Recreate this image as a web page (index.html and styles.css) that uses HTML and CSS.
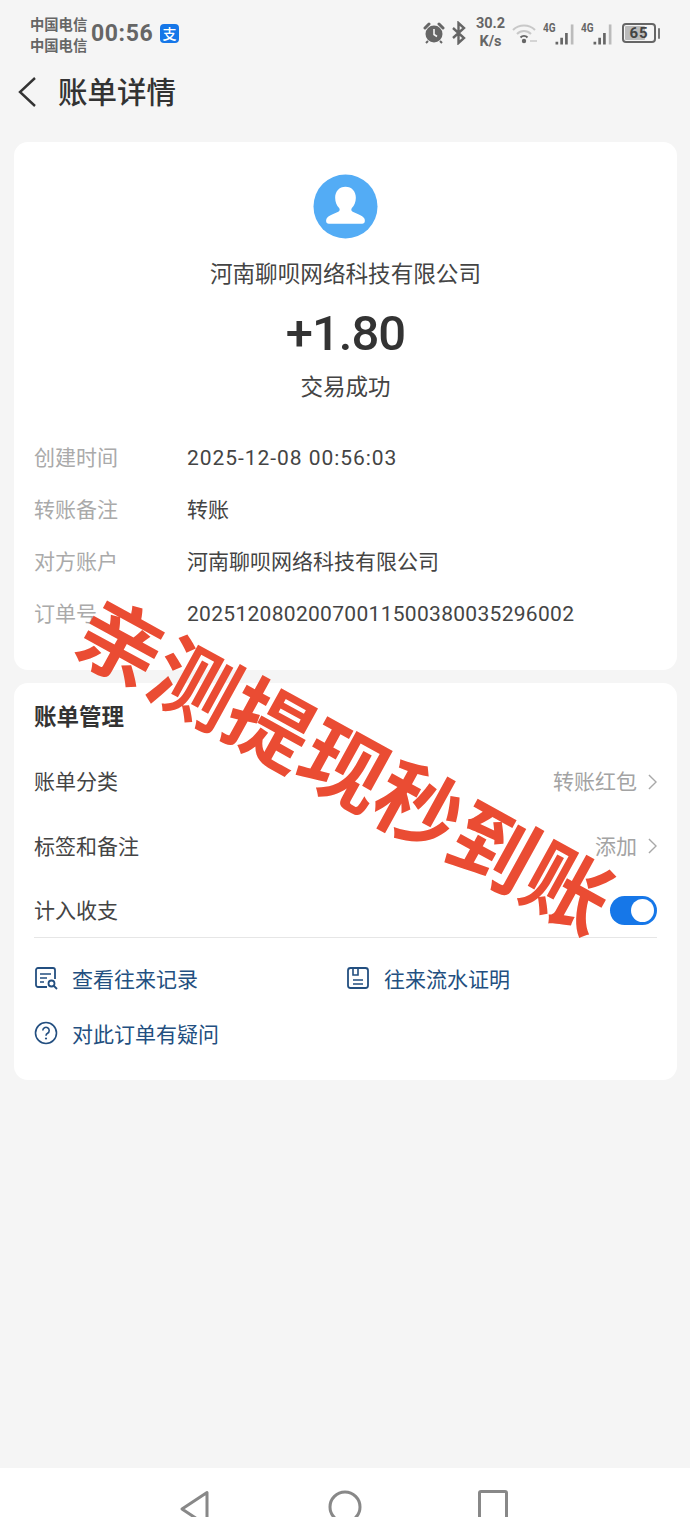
FILE: index.html
```html
<!DOCTYPE html>
<html lang="zh-CN">
<head>
    <meta charset="UTF-8">
    <meta name="viewport" content="width=device-width, initial-scale=1.0">
    <title>账单详情</title>
    <link rel="stylesheet" href="styles.css">
</head>
<body>
    <div class="page">
        <!-- Status bar -->
        <div class="status">
            <div class="carrier"><span>中国电信</span><span>中国电信</span></div>
            <span class="clock">00:56</span>
            <span class="pay-badge">支</span>
            <div class="status-right">
                <svg class="ic-alarm" viewBox="0 0 22 22"><circle cx="11" cy="12" r="8.500" fill="#666"/><path d="M2 6l4-4M20 6l-4-4" stroke="#666" stroke-width="3" stroke-linecap="round"/><path d="M11 7v5.500l3 2" stroke="#f5f5f5" stroke-width="1.600" fill="none"/><path d="M5 19l-2 2M17 19l2 2" stroke="#666" stroke-width="2"/></svg>
                <svg class="ic-bt" viewBox="0 0 16 24"><path d="M2 7l11 10-5.500 5V2L13 7 2 17" fill="none" stroke="#666" stroke-width="2.400"/></svg>
                <div class="speed"><span>30.2</span><span>K/s</span></div>
                <svg class="ic-wifi" viewBox="0 0 26 22"><path d="M1 8c6-6 16-6 22 0M5 12c4-4 10-4 14 0" fill="none" stroke="#c8c8c8" stroke-width="2"/><path d="M8.500 15.500c2-2 5-2 7 0" fill="none" stroke="#666" stroke-width="2"/><circle cx="12" cy="19" r="2.200" fill="#666"/><path d="M18 19h7" stroke="#d4d4d4" stroke-width="2"/></svg>
                <div class="signal"><span class="net">4G</span><svg viewBox="0 0 22 22"><path d="M3 22v-3M8 22v-7M13 22v-12" stroke="#666" stroke-width="2.800"/><path d="M19 22V1" stroke="#bbb" stroke-width="2.800"/></svg></div>
                <div class="signal"><span class="net">4G</span><svg viewBox="0 0 22 22"><path d="M3 22v-3M8 22v-7M13 22v-12" stroke="#666" stroke-width="2.800"/><path d="M19 22V1" stroke="#bbb" stroke-width="2.800"/></svg></div>
                <div class="battery"><div class="battery-box"><span class="battery-fill"></span><span class="battery-num">65</span></div><span class="battery-cap"></span></div>
            </div>
        </div>

        <!-- Title -->
        <header class="title-bar">
            <svg class="back" viewBox="0 0 20 32"><path d="M18 2L3 16l15 14" fill="none" stroke="#333" stroke-width="2.400"/></svg>
            <h1>账单详情</h1>
        </header>

        <section class="card summary">
            <div class="avatar">
                <svg viewBox="0 0 66 66"><circle cx="33" cy="33" r="32.500" fill="#53acf5"/><path d="M33 13c-6.500 0-10.500 5-10.500 11 0 4 1.500 8 4 10.500 1 1.200.8 3-.8 3.800-4.500 2-9.700 3.700-11.700 6.700-1 1.700-1.300 5.500 2 5.500h34c3.300 0 3-3.800 2-5.500-2-3-7.200-4.700-11.700-6.700-1.600-.8-1.800-2.600-.8-3.800 2.500-2.500 4-6.500 4-10.500 0-6-4-11-10.500-11z" fill="#fff"/></svg>
            </div>
            <p class="payer">河南聊呗网络科技有限公司</p>
            <p class="amount">+1.80</p>
            <p class="state">交易成功</p>
            <dl class="info">
                <div class="info-row"><dt>创建时间</dt><dd class="num date">2025-12-08 00:56:03</dd></div>
                <div class="info-row"><dt>转账备注</dt><dd>转账</dd></div>
                <div class="info-row"><dt>对方账户</dt><dd>河南聊呗网络科技有限公司</dd></div>
                <div class="info-row"><dt>订单号</dt><dd class="num">20251208020070011500380035296002</dd></div>
            </dl>
        </section>

        <section class="card manage">
            <h2>账单管理</h2>
            <div class="row row-first"><span>账单分类</span><span class="row-val">转账红包<svg class="chev" viewBox="0 0 10 18"><path d="M1 1l8 8-8 8" fill="none" stroke="#a8a8a8" stroke-width="1.600"/></svg></span></div>
            <div class="row"><span>标签和备注</span><span class="row-val">添加<svg class="chev" viewBox="0 0 10 18"><path d="M1 1l8 8-8 8" fill="none" stroke="#a8a8a8" stroke-width="1.600"/></svg></span></div>
            <div class="row row-last"><span>计入收支</span><span class="switch"><span class="knob"></span></span></div>
            <div class="links">
                <a class="link">
                    <svg viewBox="0 0 24 24"><path d="M13 21H4a2 2 0 0 1-2-2V4a2 2 0 0 1 2-2h15a2 2 0 0 1 2 2v9" fill="none" stroke="#234f80" stroke-width="1.800"/><path d="M6 8h11M6 12h7M6 16h4" stroke="#234f80" stroke-width="1.600"/><circle cx="17.500" cy="17.500" r="3" fill="none" stroke="#234f80" stroke-width="1.800"/><path d="M20 20l3 3" stroke="#234f80" stroke-width="1.800"/></svg>
                    查看往来记录
                </a>
                <a class="link">
                    <svg viewBox="0 0 24 24"><rect x="2" y="2" width="20" height="20" rx="2.500" fill="none" stroke="#234f80" stroke-width="1.800"/><path d="M7 2v7h5V2M7 14h10M7 18h10" fill="none" stroke="#234f80" stroke-width="1.600"/></svg>
                    往来流水证明
                </a>
                <a class="link">
                    <svg viewBox="0 0 24 24"><circle cx="12" cy="12" r="10.500" fill="none" stroke="#234f80" stroke-width="1.600"/><path d="M8.800 9.500a3.200 3.200 0 1 1 4.800 2.800c-1 .6-1.600 1.200-1.600 2.400" fill="none" stroke="#234f80" stroke-width="1.600"/><circle cx="12" cy="17.500" r="1.100" fill="#234f80"/></svg>
                    对此订单有疑问
                </a>
            </div>
        </section>

        <nav class="nav-bar">
            <svg viewBox="0 0 32 40"><path d="M28 3.500v33L3 20z" fill="none" stroke="#888" stroke-width="3" stroke-linejoin="round"/></svg>
            <svg viewBox="0 0 34 40"><circle cx="17" cy="18" r="15" fill="none" stroke="#888" stroke-width="3"/></svg>
            <svg viewBox="0 0 32 40"><rect x="2.500" y="2.500" width="27" height="32" rx="1.500" fill="none" stroke="#888" stroke-width="3"/></svg>
        </nav>

        <div class="stamp">亲测提现秒到账</div>
    </div>
</body>
</html>
```

FILE: styles.css
```css
* { box-sizing: border-box; }
html, body { margin: 0; padding: 0; }
body { font-family: "Noto Sans CJK SC", "Noto Sans", sans-serif; color: #333; background: #f5f5f5; }
p, h1, h2, dl, dd { margin: 0; }

.page { position: relative; width: 690px; height: 1517px; overflow: hidden; display: flex; flex-direction: column; }

/* Status bar */
.status { height: 68px; padding: 0 30px 0 30px; display: flex; align-items: center; color: #666; font-weight: 700; }
.carrier { display: flex; flex-direction: column; font-size: 14.300px; line-height: 21px; width: 61px; }
.clock { font-family: Roboto, sans-serif; font-size: 23px; letter-spacing: .6px; width: 69px; margin-bottom: 2px; }
.pay-badge { width: 19px; height: 19px; margin-bottom: 2px; border-radius: 4px; background: #1677e8; color: #fff; font-size: 14px; font-weight: 500; line-height: 19px; text-align: center; }
.status-right { margin-left: auto; display: flex; align-items: center; margin-bottom: 2px; }
.ic-alarm { width: 22px; height: 22px; margin-right: 6px; }
.ic-bt { width: 16px; height: 24px; margin-right: 7px; }
.speed { display: flex; flex-direction: column; align-items: center; font-family: Roboto, sans-serif; font-size: 14.500px; line-height: 18px; width: 33px; margin-right: 5px; }
.ic-wifi { width: 26px; height: 22px; margin-right: 5px; }
.signal { display: flex; align-items: flex-start; width: 32px; height: 24px; margin-right: 6px; }
.signal svg { width: 21px; height: 22px; margin-top: 2px; margin-left: -2px; }
.net { font-family: Roboto, sans-serif; font-size: 12.500px; line-height: 14px; width: 13px; flex: none; transform: scaleX(.8); transform-origin: left; }
.battery { display: flex; align-items: center; margin-left: 3px; }
.battery-box { position: relative; width: 34px; height: 20px; border: 2px solid #666; border-radius: 4px; text-align: center; }
.battery-fill { position: absolute; left: 1px; top: 1px; bottom: 1px; width: 20px; background: #bbb; border-radius: 1px; }
.battery-num { position: relative; display: block; font-family: Roboto, sans-serif; font-size: 15px; line-height: 16px; color: #444; letter-spacing: 1px; }
.battery-cap { width: 2px; height: 11px; margin-left: 2px; background: #777; border-radius: 1px; }

/* Title */
.title-bar { height: 48px; padding-left: 17px; display: flex; align-items: center; }
.back { width: 20px; height: 32px; }
.title-bar h1 { margin: 0 0 4px 21px; font-size: 29.500px; font-weight: 500; line-height: 44px; }

.card { margin: 0 13px 0 14px; background: #fff; border-radius: 14px; }

/* Summary */
.summary { height: 528px; margin-top: 26px; padding: 32px 20px 0; text-align: center; }
.avatar { height: 65px; }
.avatar svg { width: 65px; height: 65px; }
.payer { margin-top: 17px; font-size: 22.600px; line-height: 34px; color: #444; }
.amount { margin-top: 15px; font-family: Roboto, sans-serif; font-size: 49px; font-weight: 500; letter-spacing: -1px; line-height: 58px; color: #333; }
.state { margin-top: 6px; font-size: 22.500px; line-height: 32px; color: #444; }
.info { margin-top: 29px; text-align: left; }
.info-row { display: flex; height: 52px; align-items: center; font-size: 21px; }
.info-row dt { width: 153px; color: #aaa; }
.info-row dd { color: #444; }
.info-row .num { padding-top: 3px; font-family: Roboto, sans-serif; letter-spacing: .3px; }
.info-row .date { letter-spacing: .95px; }

/* Manage */
.manage { height: 397px; margin-top: 13px; padding: 15px 20px 0; }
.manage h2 { font-size: 22.500px; font-weight: 700; line-height: 34px; color: #333; }
.row { display: flex; justify-content: space-between; align-items: center; height: 64.500px; font-size: 21px; color: #444; }
.row-first { margin-top: 16px; }
.row-last { border-bottom: 1px solid #e6e6e6; height: 61px; padding-top: 4px; }
.row-val { display: flex; align-items: center; color: #a3a3a3; }
.chev { width: 9px; height: 16px; margin: 3px 0 0 11px; }
.switch { display: block; width: 47px; height: 29px; margin-top: 2px; background: #1677e8; border-radius: 15px; padding: 3px 3px 3px 21px; }
.knob { display: block; width: 23px; height: 23px; background: #fff; border-radius: 50%; }
.links { display: grid; grid-template-columns: 312px 1fr; row-gap: 14px; margin-top: 19px; }
.link { display: flex; align-items: center; height: 41px; color: #234f80; font-size: 21px; white-space: nowrap; }
.link svg { width: 24px; height: 24px; margin-right: 14px; flex: none; }

/* Bottom nav */
.nav-bar { margin-top: auto; height: 49px; background: #fff; padding: 21px 0 0 179px; display: flex; align-items: flex-start; }
.nav-bar svg { flex: none; height: 40px; }
.nav-bar svg:nth-child(1) { width: 32px; margin-right: 117px; }
.nav-bar svg:nth-child(2) { width: 34px; margin-right: 115px; }
.nav-bar svg:nth-child(3) { width: 32px; }

/* Red stamp over the page */
.stamp { position: absolute; left: 347px; top: 761px; transform: translate(-50%, -50%) rotate(28.800deg); font-size: 85px; line-height: 1; font-weight: 700; color: #ea4c33; white-space: nowrap; }
```
